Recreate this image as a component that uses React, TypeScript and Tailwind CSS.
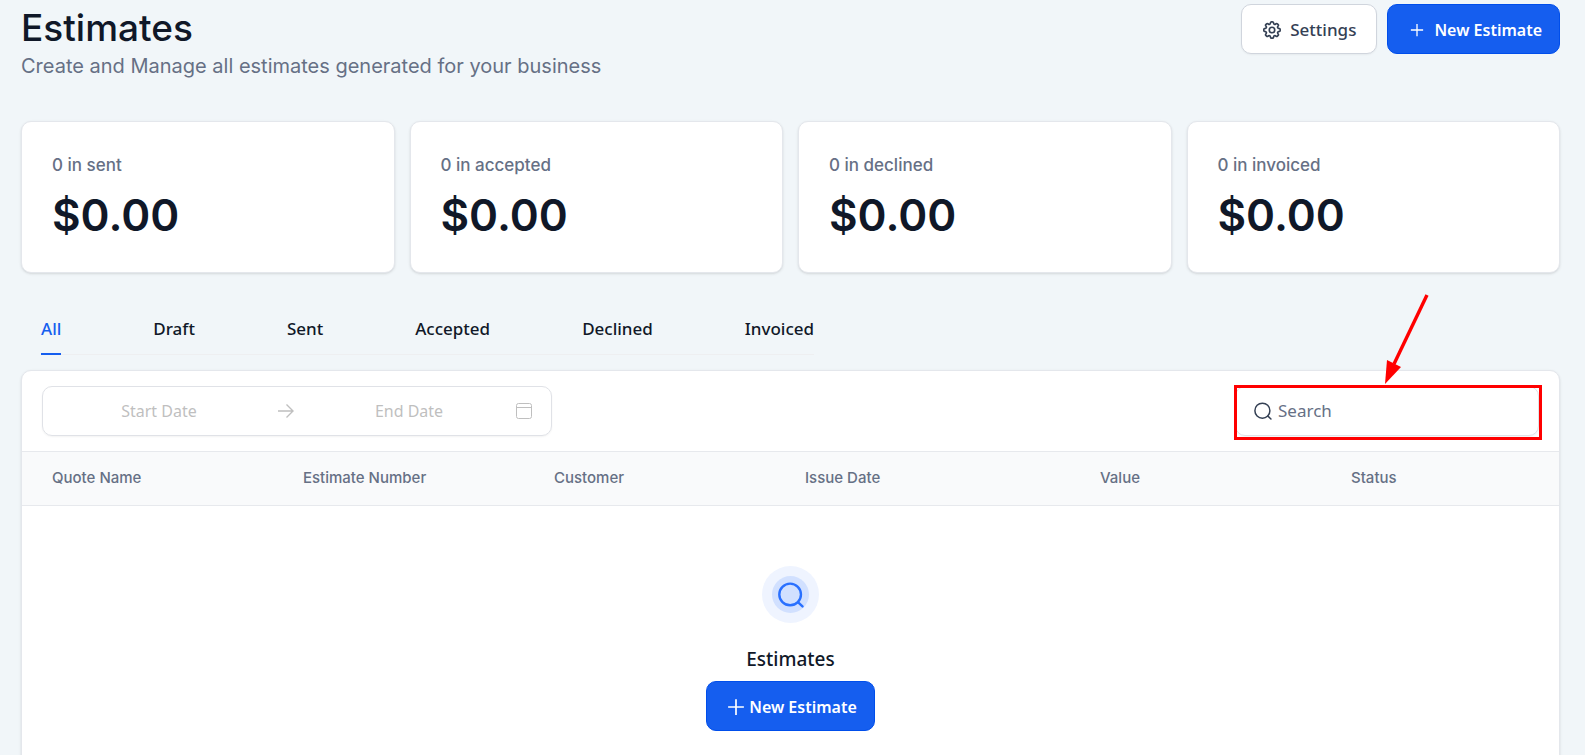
import { ReactNode } from 'react';

const stats = [
  { label: '0 in sent', value: '$0.00' },
  { label: '0 in accepted', value: '$0.00' },
  { label: '0 in declined', value: '$0.00' },
  { label: '0 in invoiced', value: '$0.00' },
];

const tabs = ['All', 'Draft', 'Sent', 'Accepted', 'Declined', 'Invoiced'];

const columns = [
  { name: 'Quote Name', style: 'w-[251px] pl-[30px]' },
  { name: 'Estimate Number', style: 'w-[251px] pl-[30px]' },
  { name: 'Customer', style: 'w-[251px] pl-[30px]' },
  { name: 'Issue Date', style: 'w-[295px] pl-[30px]' },
  { name: 'Value', style: 'w-[251px] pl-[30px]' },
  { name: 'Status', style: 'pl-[30px]' },
];

function SearchIcon({ className, stroke }: { className: string; stroke: number }) {
  return (
    <svg className={className} viewBox="0 0 24 24" fill="none" stroke="currentColor" strokeWidth={stroke} strokeLinecap="round" strokeLinejoin="round" aria-hidden="true">
      <circle cx="11.2" cy="11.5" r="10" />
      <path d="M18.6 18.8L22.6 22.6" />
    </svg>
  );
}

function PlusIcon({ className }: { className: string }) {
  return (
    <svg className={className} viewBox="0 0 16 16" fill="none" stroke="currentColor" strokeWidth="1.5" aria-hidden="true">
      <path d="M8 1v14M1 8h14" />
    </svg>
  );
}

function GearIcon() {
  return (
    <svg className="size-5" viewBox="1 1 22 22" fill="none" stroke="currentColor" strokeWidth="1.8" strokeLinecap="round" strokeLinejoin="round" aria-hidden="true">
      <path d="M10.343 3.94c.09-.542.56-.94 1.11-.94h1.093c.55 0 1.02.398 1.11.94l.149.894c.07.424.384.764.78.93.398.164.855.142 1.205-.108l.737-.527a1.125 1.125 0 0 1 1.45.12l.773.774c.39.389.44 1.002.12 1.45l-.527.737c-.25.35-.272.806-.107 1.204.165.397.505.71.93.78l.893.15c.543.09.94.559.94 1.109v1.094c0 .55-.397 1.02-.94 1.11l-.894.149c-.424.07-.764.383-.929.78-.165.398-.143.854.107 1.204l.527.738c.32.447.269 1.06-.12 1.45l-.774.773a1.125 1.125 0 0 1-1.449.12l-.738-.527c-.35-.25-.806-.272-1.203-.107-.398.165-.71.505-.781.929l-.149.894c-.09.542-.56.94-1.11.94h-1.094c-.55 0-1.019-.398-1.11-.94l-.148-.894c-.071-.424-.384-.764-.781-.93-.398-.164-.854-.142-1.204.108l-.738.527c-.447.32-1.06.269-1.45-.12l-.773-.774a1.125 1.125 0 0 1-.12-1.45l.527-.737c.25-.35.272-.806.108-1.204-.165-.397-.506-.71-.93-.78l-.894-.15c-.542-.09-.94-.56-.94-1.109v-1.094c0-.55.398-1.02.94-1.11l.894-.149c.424-.07.765-.383.93-.78.165-.398.143-.854-.108-1.204l-.526-.738a1.125 1.125 0 0 1 .12-1.45l.773-.773a1.125 1.125 0 0 1 1.45-.12l.737.527c.35.25.807.272 1.204.107.397-.165.71-.505.78-.929z" />
      <circle cx="12" cy="12" r="3" />
    </svg>
  );
}

function PrimaryButton({ children, className }: { children: ReactNode; className: string }) {
  return (
    <button type="button" className={`flex h-[50px] items-center rounded-[10px] border border-[#004eeb] bg-[#155eef] pt-px pr-[17px] pl-5 text-[16px] font-semibold whitespace-nowrap text-white ${className}`}>
      {children}
    </button>
  );
}

export default function App() {
  return (
    <div className="min-h-screen bg-[#f1f6f9] pt-1 pr-[25px] pl-[21px] font-['Noto_Sans',sans-serif] text-[#101828]">
      <header className="flex items-start justify-between">
        <div className="font-['Inter',sans-serif]">
          <h1 className="text-[37px] leading-[47px] font-medium">Estimates</h1>
          <p className="text-[20px] leading-[30px] text-[#667085]">Create and Manage all estimates generated for your business</p>
        </div>
        <div className="flex gap-[10px]">
          <button type="button" className="flex h-[50px] items-center gap-2 rounded-[10px] border border-[#d0d5dd] bg-white pt-px pr-5 pl-5 text-[17px] font-medium text-[#344054] shadow-xs">
            <GearIcon />
            Settings
          </button>
          <PrimaryButton className="gap-2">
            <PlusIcon className="size-[18px] p-[2px]" />
            New Estimate
          </PrimaryButton>
        </div>
      </header>

      <section className="mt-10 grid grid-cols-4 gap-[15px] font-['Inter',sans-serif]">
        {stats.map((s) => (
          <div key={s.label} className="rounded-[10px] border border-[#e4e7ec] bg-white px-[30px] pt-[30px] pb-[28px] shadow-sm">
            <p className="text-[17px] leading-[26px] font-medium text-[#667085]">{s.label}</p>
            <p className="mt-2 text-[44px] leading-[58px] font-semibold">{s.value}</p>
          </div>
        ))}
      </section>

      <nav className="mt-[33px] ml-5 flex w-fit gap-[92px] border-b border-[#eeeff1]" aria-label="Estimate status">
        {tabs.map((t) => (
          <a
            key={t}
            href={`#${t.toLowerCase()}`}
            className={`-mb-px border-b-2 pt-[10px] pb-[11px] text-[17px] leading-[26px] font-medium ${t === 'All' ? 'border-[#155eef] text-[#155eef]' : 'border-transparent'}`}
          >
            {t}
          </a>
        ))}
      </nav>

      <section className="mt-[15px] rounded-t-[10px] border border-[#e4e7ec] bg-white shadow-sm">
        <div className="flex items-center justify-between px-5 py-[15px]">
          <div className="flex h-[50px] w-[510px] items-center rounded-[10px] border border-[#e0e2e7] pr-[19px] pl-[9px] text-[#bfbfbf] shadow-xs">
            <input aria-label="Start date" placeholder="Start Date" className="min-w-0 flex-1 bg-transparent text-center text-[16px] outline-none placeholder:text-[#bfbfbf]" />
            <svg className="mr-2 ml-3 size-4" viewBox="0 0 16 16" fill="none" stroke="currentColor" strokeWidth="1.4" aria-hidden="true">
              <path d="M0 8h15M8.5 1.5L15 8L8.5 14.5" />
            </svg>
            <input aria-label="End date" placeholder="End Date" className="min-w-0 flex-1 bg-transparent text-center text-[16px] outline-none placeholder:text-[#bfbfbf]" />
            <svg className="size-4" viewBox="0 0 16 16" fill="none" stroke="currentColor" aria-hidden="true">
              <rect x=".5" y=".5" width="15" height="15" rx="2" />
              <path d="M.5 4.5h15" />
            </svg>
          </div>
          <div className="relative">
            <label className="flex h-[50px] w-[304px] items-center gap-[6px] rounded-[10px] border border-[#e0e2e7] px-[18px] text-[#344054] shadow-xs">
              <SearchIcon className="size-[18px] shrink-0" stroke={2} />
              <input aria-label="Search" placeholder="Search" className="w-full min-w-0 bg-transparent text-[17px] outline-none placeholder:text-[#667085]" />
            </label>
            <div className="pointer-events-none absolute -top-[1px] -right-[3px] -bottom-1 -left-[1px] border-3 border-[#ff0000]" />
            <svg className="pointer-events-none absolute right-[109px] bottom-[51px] h-[92px] w-12" viewBox="0 0 48 92" aria-hidden="true">
              <path d="M45 2L12 71" stroke="#ff0000" strokeWidth="3.4" />
              <path d="M3 91L5 67L19 74Z" fill="#ff0000" />
            </svg>
          </div>
        </div>

        <table className="w-full table-fixed border-y border-[#e7e9ed] bg-[#f9fafb] font-['Inter',sans-serif]">
          <thead>
            <tr>
              {columns.map((c) => (
                <th key={c.name} scope="col" className={`h-[54px] text-left text-[15px] font-medium text-[#667085] ${c.style}`}>
                  {c.name}
                </th>
              ))}
            </tr>
          </thead>
        </table>

        <div className="flex flex-col items-center pt-[60px] pb-16">
          <div className="flex size-[57px] items-center justify-center rounded-full bg-[#eff4ff]">
            <div className="flex size-[37px] items-center justify-center rounded-full bg-[#d1e0ff] text-[#2970ff]">
              <SearchIcon className="size-[26px]" stroke={2.2} />
            </div>
          </div>
          <h2 className="mt-[21px] mb-[7px] text-[19px] leading-[30px] font-medium">Estimates</h2>
          <PrimaryButton className="gap-1">
            <PlusIcon className="size-[18px]" />
            New Estimate
          </PrimaryButton>
        </div>
      </section>
    </div>
  );
}
